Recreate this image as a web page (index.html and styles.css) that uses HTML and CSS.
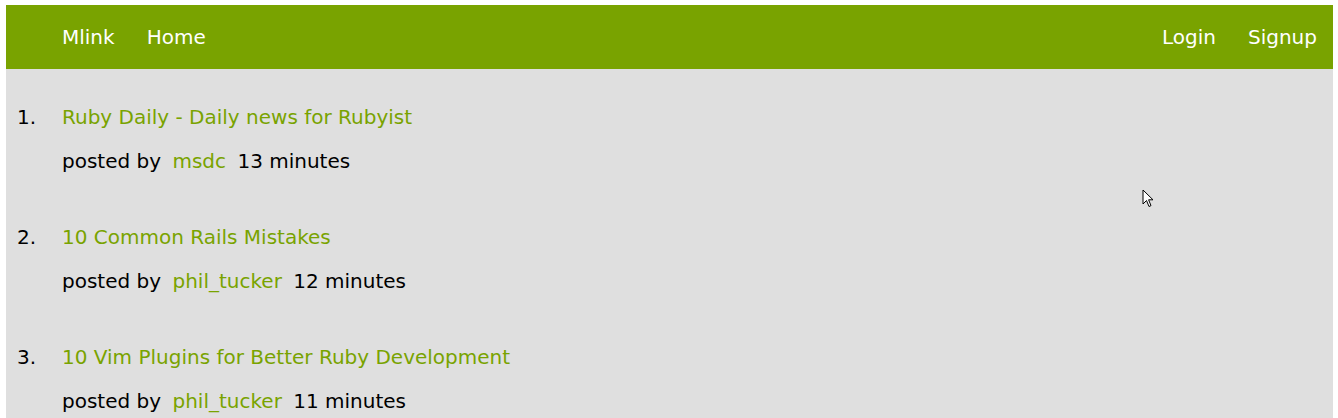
FILE: index.html
```html
<!DOCTYPE html>
<html>
<head>
<meta charset="utf-8">
<link rel="stylesheet" href="styles.css">
</head>
<body>
<div class="page">
  <nav class="topbar">
    <div class="nav-left">
      <a class="nav-link" href="#">Mlink</a>
      <a class="nav-link" href="#">Home</a>
    </div>
    <div class="nav-right">
      <a class="nav-link" href="#">Login</a>
      <a class="nav-link" href="#">Signup</a>
    </div>
  </nav>
  <ol class="links">
    <li class="item">
      <span class="num">1.</span>
      <div class="body">
        <a class="title" href="#">Ruby Daily - Daily news for Rubyist</a>
        <div class="meta">posted by <a class="user" href="#">msdc</a> 13 minutes</div>
      </div>
    </li>
    <li class="item">
      <span class="num">2.</span>
      <div class="body">
        <a class="title" href="#">10 Common Rails Mistakes</a>
        <div class="meta">posted by <a class="user" href="#">phil_tucker</a> 12 minutes</div>
      </div>
    </li>
    <li class="item">
      <span class="num">3.</span>
      <div class="body">
        <a class="title" href="#">10 Vim Plugins for Better Ruby Development</a>
        <div class="meta">posted by <a class="user" href="#">phil_tucker</a> 11 minutes</div>
      </div>
    </li>
  </ol>
  <svg class="cursor" width="14" height="20" viewBox="0 0 14 20"><path d="M1 1 L1 15 L4.5 11.5 L7 17.5 L9 16.6 L6.6 10.8 L11 10.8 Z" fill="#fff" stroke="#000" stroke-width="1" stroke-linejoin="round"/></svg>
</div>
</body>
</html>
```
FILE: styles.css
```css
html, body {
  margin: 0;
  padding: 0;
  background: #ffffff;
}
body {
  padding: 5px 5px 0 6px;
  font-family: "DejaVu Sans", sans-serif;
  font-size: 20px;
  color: #000;
}
.page {
  position: relative;
  background: #dfdfdf;
  min-height: 413px;
}
.topbar {
  height: 64px;
  background: #79a300;
  display: flex;
  align-items: center;
  justify-content: space-between;
  padding-left: 40px;
}
.nav-left, .nav-right {
  display: flex;
}
.nav-link {
  color: #fff;
  text-decoration: none;
  padding: 0 16px;
  line-height: 64px;
}
.links {
  list-style: none;
  margin: 0;
  padding: 26px 0 0 0;
}
.item {
  display: flex;
  margin-bottom: 32px;
}
.num {
  flex: 0 0 56px;
  padding-left: 11px;
  box-sizing: border-box;
  line-height: 44px;
}
.body {
  display: flex;
  flex-direction: column;
}
.title {
  color: #79a300;
  text-decoration: none;
  line-height: 44px;
}
.meta {
  line-height: 44px;
}
.user {
  color: #79a300;
  text-decoration: none;
  margin: 0 5px;
}
.cursor {
  position: absolute;
  left: 1136px;
  top: 184px;
}
```
